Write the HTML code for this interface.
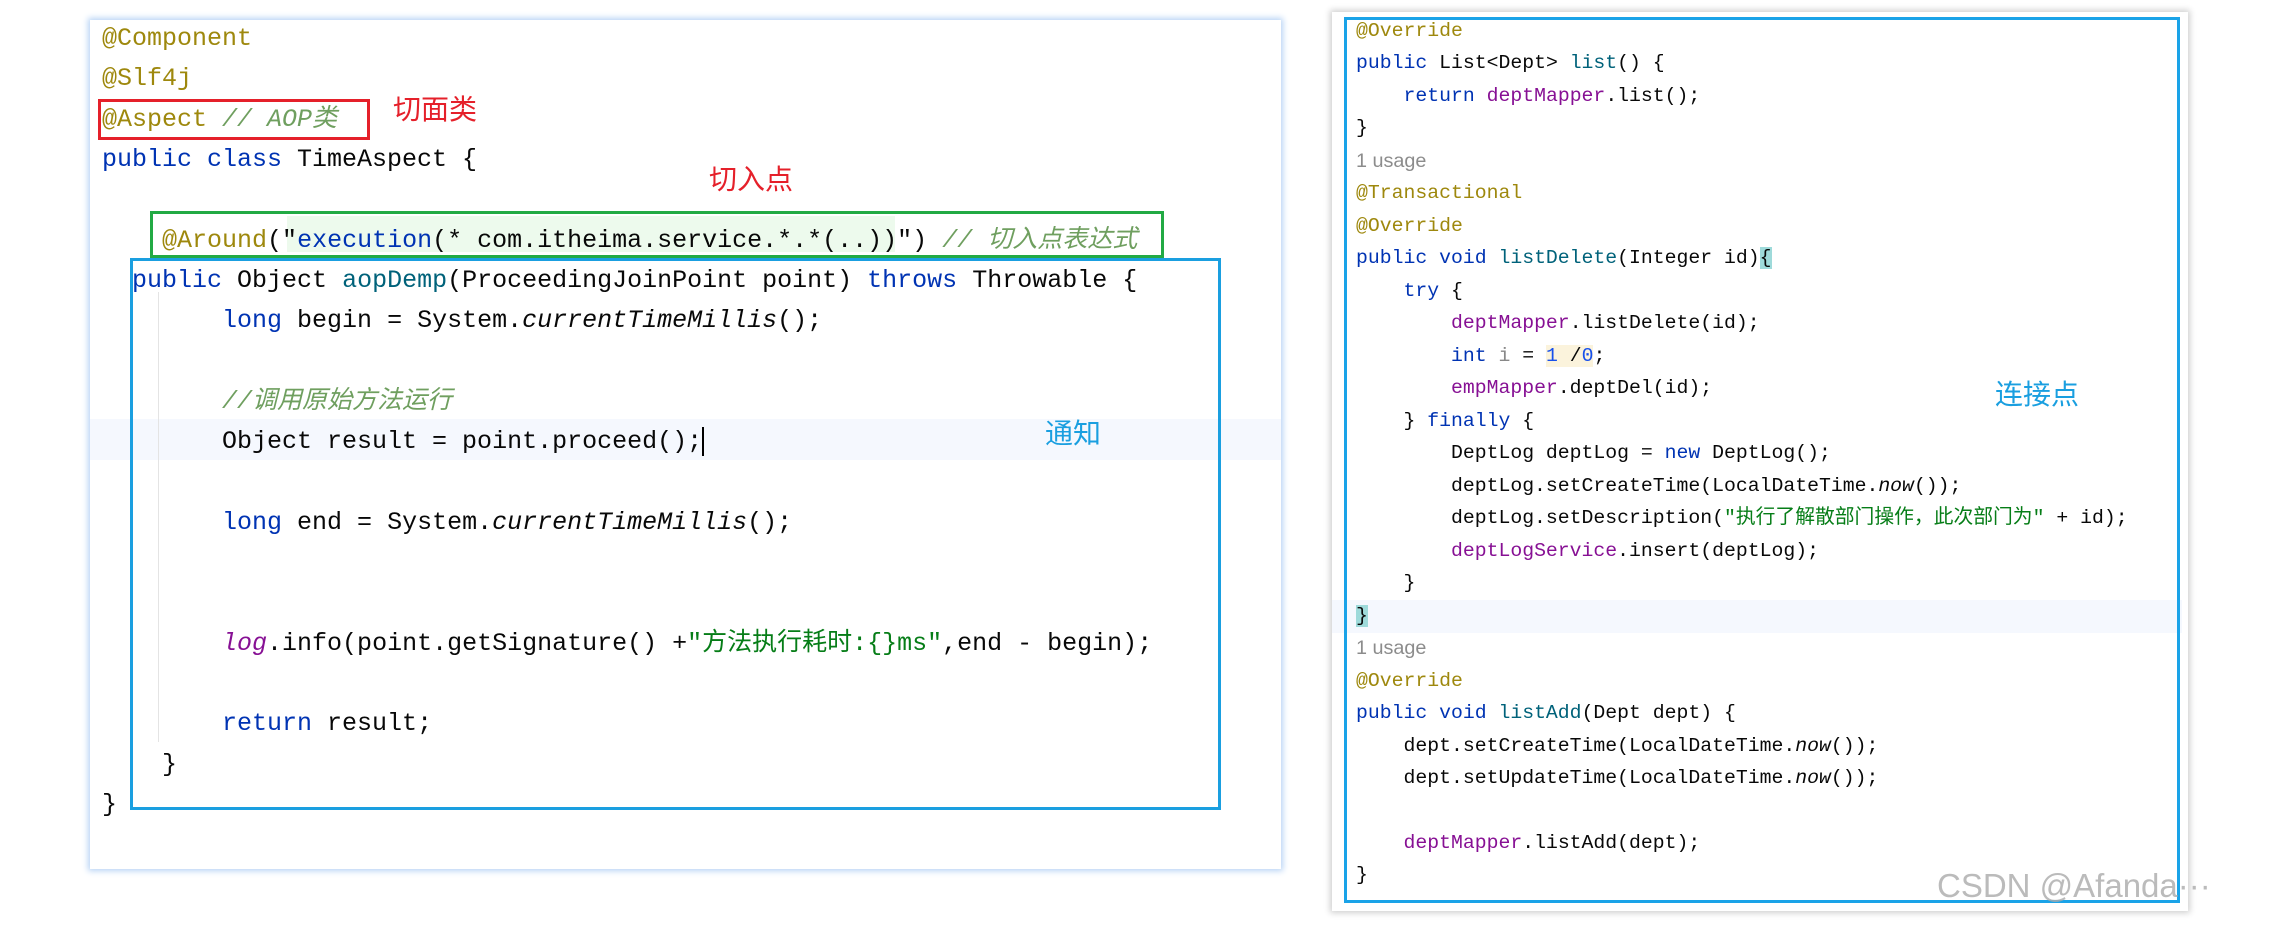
<!DOCTYPE html>
<html><head><meta charset="utf-8"><style>
body{margin:0;width:2283px;height:928px;background:#fff;position:relative;overflow:hidden;font-family:"Liberation Mono","Noto Sans CJK SC",monospace;}
.p{position:absolute;}
.l{position:absolute;white-space:pre;color:#080808;}
.L .l{font-size:25px;line-height:40px;height:40px;left:102px;margin-top:3px;}
.R .l{font-size:19.8px;line-height:32px;height:32px;left:1356px;margin-top:2px;}
.a{color:#9e880d}.k{color:#0033b3}.s{color:#067d17}.c{color:#6f9f5f;font-style:italic}.f{color:#871094}.m{color:#00627a}.n{color:#1750eb}.i{font-style:italic}.g{color:#8c8c8c;font-family:"Liberation Sans",sans-serif}
.lab{position:absolute;font-family:"Liberation Sans","Noto Sans CJK SC",sans-serif;font-size:28px;line-height:34px;}
</style></head><body>
<div class="p" style="left:90px;top:20px;width:1191px;height:849px;box-shadow:0 0 6px 2px #b7d3f5;background:#fff"></div>
<div class="p" style="left:90px;top:419px;width:1191px;height:41px;background:#f5f8fe"></div>
<div class="p" style="left:150px;top:211px;width:1008px;height:41px;border:3px solid #22aa44"></div>
<div class="p" style="left:287px;top:216px;width:608px;height:36px;background:#edfaed"></div>
<div class="p" style="left:98px;top:99px;width:266px;height:35px;border:3px solid #e5202a"></div>
<div class="p" style="left:130px;top:258px;width:1085px;height:546px;border:3px solid #1a9fe0"></div>
<div class="p" style="left:158px;top:292px;width:1px;height:450px;background:#e4e4e4"></div>
<div class="L">
<div class="l a" style="top:16px">@Component</div>
<div class="l a" style="top:56px">@Slf4j</div>
<div class="l" style="top:97px"><span class="a">@Aspect</span> <span class="c">// AOP类</span></div>
<div class="l" style="top:137px"><span class="k">public class</span> TimeAspect {</div>
<div class="l" style="top:218px">    <span class="a">@Around</span>("<span class="k">execution</span>(* com.itheima.service.*.*(..))") <span class="c">// 切入点表达式</span></div>
<div class="l" style="top:258px">  <span class="k">public</span> Object <span class="m">aopDemp</span>(ProceedingJoinPoint point) <span class="k">throws</span> Throwable {</div>
<div class="l" style="top:298px">        <span class="k">long</span> begin = System.<span class="i">currentTimeMillis</span>();</div>
<div class="l" style="top:379px">        <span class="c">//调用原始方法运行</span></div>
<div class="l" style="top:419px">        Object result = point.proceed();<span style="border-left:2px solid #000"></span></div>
<div class="l" style="top:500px">        <span class="k">long</span> end = System.<span class="i">currentTimeMillis</span>();</div>
<div class="l" style="top:621px">        <span class="f i">log</span>.info(point.getSignature() +<span class="s">"方法执行耗时:{}ms"</span>,end - begin);</div>
<div class="l" style="top:701px">        <span class="k">return</span> result;</div>
<div class="l" style="top:742px">    }</div>
<div class="l" style="top:782px">}</div>
</div>
<div class="lab" style="left:393px;top:93px;color:#e5202a">切面类</div>
<div class="lab" style="left:709px;top:163px;color:#e5202a">切入点</div>
<div class="lab" style="left:1045px;top:417px;color:#1a9fe0">通知</div>

<div class="p" style="left:1332px;top:12px;width:856px;height:899px;box-shadow:0 0 6px 2px #d0d0d0;background:#fff"></div>
<div class="p" style="left:1332px;top:600px;width:850px;height:33px;background:#f5f8fe"></div>
<div class="p" style="left:1344px;top:17px;width:830px;height:880px;border:3px solid #1aa3e8"></div>
<div class="R">
<div class="l a" style="top:13px">@Override</div>
<div class="l" style="top:45px"><span class="k">public</span> List&lt;Dept&gt; <span class="m">list</span>() {</div>
<div class="l" style="top:78px">    <span class="k">return</span> <span class="f">deptMapper</span>.list();</div>
<div class="l" style="top:110px">}</div>
<div class="l g" style="top:143px">1 usage</div>
<div class="l a" style="top:175px">@Transactional</div>
<div class="l a" style="top:208px">@Override</div>
<div class="l" style="top:240px"><span class="k">public void</span> <span class="m">listDelete</span>(Integer id)<span style="background:#9edada">{</span></div>
<div class="l" style="top:273px">    <span class="k">try</span> {</div>
<div class="l" style="top:305px">        <span class="f">deptMapper</span>.listDelete(id);</div>
<div class="l" style="top:338px">        <span class="k">int</span> <span style="color:#888">i</span> = <span style="background:#fbf3dc"><span class="n">1</span> /<span class="n">0</span></span>;</div>
<div class="l" style="top:370px">        <span class="f">empMapper</span>.deptDel(id);</div>
<div class="l" style="top:403px">    } <span class="k">finally</span> {</div>
<div class="l" style="top:435px">        DeptLog deptLog = <span class="k">new</span> DeptLog();</div>
<div class="l" style="top:468px">        deptLog.setCreateTime(LocalDateTime.<span class="i">now</span>());</div>
<div class="l" style="top:500px">        deptLog.setDescription(<span class="s">"执行了解散部门操作，此次部门为"</span> + id);</div>
<div class="l" style="top:533px">        <span class="f">deptLogService</span>.insert(deptLog);</div>
<div class="l" style="top:565px">    }</div>
<div class="l" style="top:598px"><span style="background:#9edada">}</span></div>
<div class="l g" style="top:630px">1 usage</div>
<div class="l a" style="top:663px">@Override</div>
<div class="l" style="top:695px"><span class="k">public void</span> <span class="m">listAdd</span>(Dept dept) {</div>
<div class="l" style="top:728px">    dept.setCreateTime(LocalDateTime.<span class="i">now</span>());</div>
<div class="l" style="top:760px">    dept.setUpdateTime(LocalDateTime.<span class="i">now</span>());</div>
<div class="l" style="top:825px">    <span class="f">deptMapper</span>.listAdd(dept);</div>
<div class="l" style="top:857px">}</div>
</div>
<div class="lab" style="left:1995px;top:378px;color:#1a9fe0">连接点</div>
<div class="lab" style="left:1937px;top:869px;font-size:33px;color:rgba(170,170,170,0.8)">CSDN @Afanda···</div>
</body></html>
